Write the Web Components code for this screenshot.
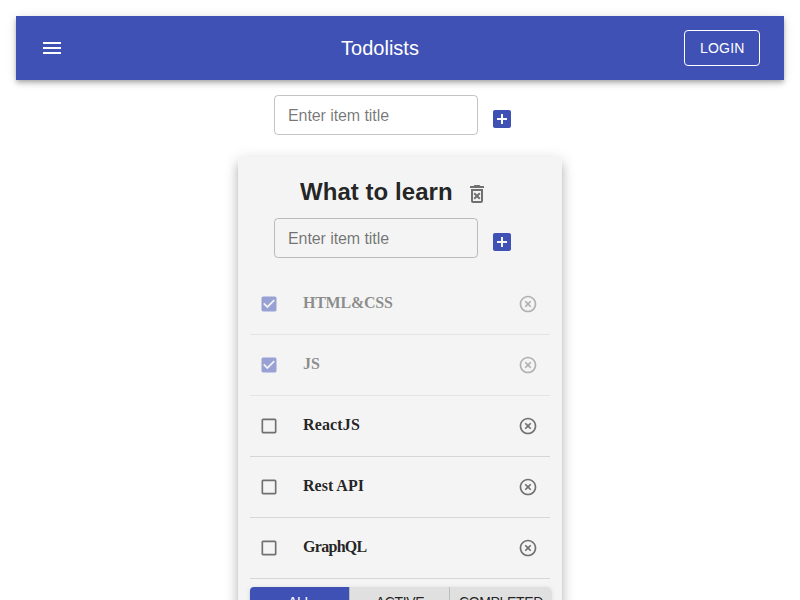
<!DOCTYPE html>
<html lang="en">
<head>
<meta charset="utf-8">
<title>Todolists</title>
<style>
html{overflow:hidden}
body{margin:0;height:600px;overflow:hidden;background:#fff;color:rgba(0,0,0,.87);font-family:"Liberation Sans",Arial,sans-serif}
</style>
</head>
<body>
<todo-app></todo-app>
<script>
const paths = {
  menu: 'M3 18h18v-2H3v2zm0-5h18v-2H3v2zm0-7v2h18V6H3z',
  add: 'M19 3H5c-1.11 0-2 .9-2 2v14c0 1.1.89 2 2 2h14c1.1 0 2-.9 2-2V5c0-1.1-.9-2-2-2zm-2 10h-4v4h-2v-4H7v-2h4V7h2v4h4v2z',
  trash: 'M14.12 10.47L12 12.59l-2.13-2.12-1.41 1.41L10.59 14l-2.12 2.12 1.41 1.41L12 15.41l2.12 2.12 1.41-1.41L13.41 14l2.12-2.12zM15.5 4l-1-1h-5l-1 1H5v2h14V4zM6 19c0 1.1.9 2 2 2h8c1.1 0 2-.9 2-2V7H6v12zM8 9h8v10H8V9z',
  remove: 'M14.59 8L12 10.59 9.41 8 8 9.41 10.59 12 8 14.59 9.41 16 12 13.41 14.59 16 16 14.59 13.41 12 16 9.41 14.59 8zM12 2C6.47 2 2 6.47 2 12s4.47 10 10 10 10-4.47 10-10S17.53 2 12 2zm0 18c-4.41 0-8-3.59-8-8s3.59-8 8-8 8 3.59 8 8-3.59 8-8 8z',
  checked: 'M19 3H5c-1.11 0-2 .9-2 2v14c0 1.1.89 2 2 2h14c1.11 0 2-.9 2-2V5c0-1.1-.89-2-2-2zm-9 14l-5-5 1.41-1.41L10 14.17l7.59-7.59L19 8l-9 9z',
  unchecked: 'M19 5v14H5V5h14m0-2H5c-1.1 0-2 .9-2 2v14c0 1.1.9 2 2 2h14c1.1 0 2-.9 2-2V5c0-1.1-.9-2-2-2z'
};
function define(name, render) {
  customElements.define(name, class extends HTMLElement {
    constructor() {
      super();
      this.attachShadow({mode: 'open'});
    }
    connectedCallback() {
      this.shadowRoot.innerHTML = '<style>*{box-sizing:border-box}</style>' + render(this);
    }
  });
}
define('ui-icon', el => `
<style>:host{display:block;flex:none;width:var(--size,24px);height:var(--size,24px)}svg{display:block;width:100%;height:100%;fill:currentColor}</style>
<svg viewBox="0 0 24 24"><path d="${paths[el.getAttribute('name')]}"/></svg>`);

define('app-bar', () => `
<style>
:host{display:flex;box-sizing:border-box;height:64px;padding:0 24px;align-items:center;justify-content:space-between;background:#3f51b5;color:#fff;
box-shadow:0 2px 4px -1px rgba(0,0,0,.2),0 4px 5px rgba(0,0,0,.14),0 1px 10px rgba(0,0,0,.12)}
.menu{padding:12px;margin-left:-12px}
.title{font-size:20px;font-weight:500;line-height:32px}
button{font:500 14px/24.5px "Liberation Sans",Arial,sans-serif;letter-spacing:.2px;color:inherit;background:none;border:1px solid #fff;border-radius:4px;padding:5px 15px;height:36px;width:76px;white-space:nowrap}
</style>
<div class="menu"><ui-icon name="menu"></ui-icon></div>
<div class="title"><slot></slot></div>
<button>LOGIN</button>`);

define('add-item', () => `
<style>
:host{display:flex;width:252px;height:48px;margin:0 auto}
input{font:16px/19px "Liberation Sans",Arial,sans-serif;letter-spacing:-.08px;width:204px;height:40px;padding:11px 13px 9px;border:1px solid rgba(0,0,0,.23);border-radius:4px;background:none;color:inherit}
input::placeholder{color:rgba(0,0,0,.54);opacity:1}
.btn{padding:12px;color:#3f51b5}
</style>
<input placeholder="Enter item title"><div class="btn"><ui-icon name="add"></ui-icon></div>`);

define('todo-task', el => {
  const done = el.hasAttribute('done');
  return `
<style>
:host{display:flex;box-sizing:border-box;height:61px;align-items:center;border-bottom:1px solid rgba(0,0,0,.12);--size:20px}
:host([done]){opacity:.5}
.box{padding:9px;color:${done ? '#3f51b5' : 'rgba(0,0,0,.54)'}}
.text{flex:1;padding-left:15px;margin-top:-2px;font:bold 16px/18px "Liberation Serif","Times New Roman",serif}
.del{padding:12px;color:rgba(0,0,0,.54)}
</style>
<div class="box"><ui-icon name="${done ? 'checked' : 'unchecked'}"></ui-icon></div>
<div class="text"><slot></slot></div>
<div class="del"><ui-icon name="remove"></ui-icon></div>`;
});

define('filter-group', () => `
<style>
:host{display:flex;margin-top:8px;width:301px;height:37px;border-radius:4px;overflow:hidden;box-shadow:0 3px 1px -2px rgba(0,0,0,.2),0 2px 2px rgba(0,0,0,.14),0 1px 5px rgba(0,0,0,.12)}
button{display:block;flex:none;width:100px;border:0;border-right:1px solid #bdbdbd;background:#e0e0e0;color:rgba(0,0,0,.87);font:500 14px/16px "Liberation Sans",Arial,sans-serif;letter-spacing:-.35px;padding:0 0 7px 1px;white-space:nowrap}
.on{background:#3f51b5;color:#fff}
button:last-child{border-right:0;width:101px}
</style>
<button class="on">ALL</button><button>ACTIVE</button><button>COMPLETED</button>`);

define('todo-list', () => `
<style>
:host{display:block;box-sizing:border-box;width:324px;height:480px;margin:14px auto 0;padding:12px;background:#f4f4f4;border-radius:4px;
box-shadow:0 5px 5px -3px rgba(0,0,0,.2),0 8px 10px 1px rgba(0,0,0,.14),0 3px 14px 2px rgba(0,0,0,.12)}
h2{display:flex;align-items:center;height:48px;margin:0 0 1px;padding-left:50px;font-size:24px;line-height:28px;letter-spacing:.05px}
h2 span{margin-top:-2px}
.del{margin-left:auto;margin-right:61px;margin-top:1px;color:rgba(0,0,0,.54)}
.tasks{margin-top:8px}
</style>
<h2><span>What to learn</span><div class="del"><ui-icon name="trash"></ui-icon></div></h2>
<add-item></add-item>
<div class="tasks"><slot></slot></div>
<filter-group></filter-group>`);

define('todo-app', () => `
<style>:host{display:block;padding:16px}.new{padding-top:15px}.tight{letter-spacing:-.25px}.snug{letter-spacing:-.7px}.wide{letter-spacing:.15px}</style>
<app-bar>Todolists</app-bar>
<div class="new"><add-item></add-item></div>
<todo-list>
<todo-task done class="tight">HTML&amp;CSS</todo-task>
<todo-task done>JS</todo-task>
<todo-task class="wide">ReactJS</todo-task>
<todo-task>Rest API</todo-task>
<todo-task class="snug">GraphQL</todo-task>
</todo-list>`);
</script>
</body>
</html>
